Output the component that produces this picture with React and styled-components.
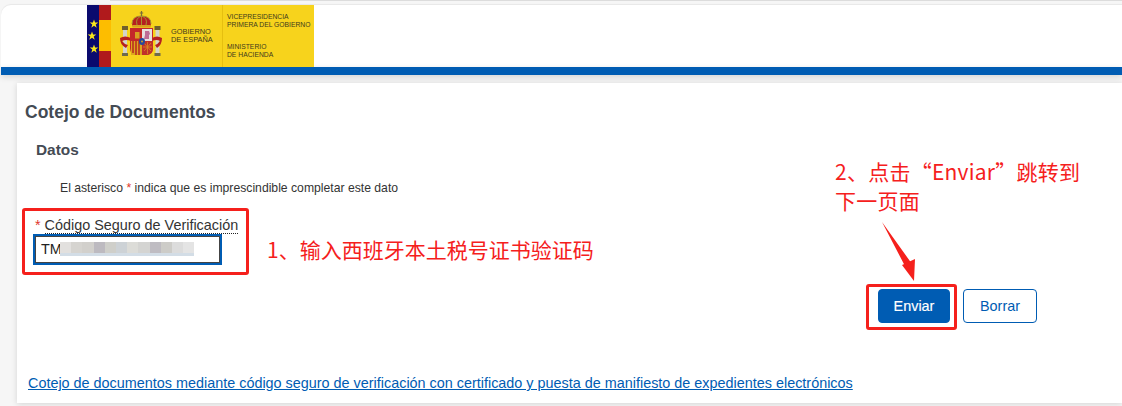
import React from "react";
import styled, { createGlobalStyle } from "styled-components";

const GlobalStyle = createGlobalStyle`
	html, body {
		margin: 0;
		padding: 0;
		background: #f6f6f6;
		font-family: "Liberation Sans", Arial, sans-serif;
		overflow: hidden;
	}
`;

const BLUR_BLOCKS = ["#e2e0de", "#d6d4d0", "#d2d0cc", "#bdbac0", "#cfcfca", "#cdd2d6", "#dcdcd8", "#d4d4d2", "#bfbcc2", "#cdccc8", "#dcdcdc", "#e4e4e4"];

const STAR = "M0 -4.500 L1.100 -1.400 L4.300 -1.400 L1.700 0.600 L2.700 3.700 L0 1.800 L-2.700 3.700 L-1.700 0.600 L-4.300 -1.400 L-1.100 -1.400Z";

function Logo() {
	return (
		<LogoBox>
			<svg width="227" height="62" viewBox="0 0 227 62">
				<rect width="227" height="62" fill="#f7d31c" />
				{/* flag bands */}
				<rect width="12" height="62" fill="#0a0a6e" />
				<rect x="12" width="12" height="62" fill="#b01a1c" />
				<rect x="12" y="15" width="12" height="31" fill="#fdbd00" />
				<path d={STAR} transform="translate(7 19)" fill="#f8e71c" />
				<path d={STAR} transform="translate(5 31)" fill="#f8e71c" />
				<path d={STAR} transform="translate(7 44)" fill="#f8e71c" />

				{/* columns */}
				<rect x="36" y="24" width="4" height="24" fill="#d4d4c8" />
				<rect x="68.500" y="24" width="4" height="24" fill="#d4d4c8" />
				<rect x="35" y="21" width="6" height="4" fill="#6f5f2c" />
				<rect x="67.500" y="21" width="6" height="4" fill="#6f5f2c" />
				<rect x="35" y="48" width="6" height="3" fill="#6f6a4a" />
				<rect x="67.500" y="48" width="6" height="3" fill="#6f6a4a" />
				{/* ribbons */}
				<path d="M33 33 Q38 30 44 33 L44 36 Q39 34 35 36 Q37 39 41 40 L39 43 Q33 40 33 33Z" fill="#b5201f" />
				<path d="M75 33 Q70 30 65 33 L65 36 Q70 34 73 36 Q71 39 68 40 L70 43 Q75 40 75 33Z" fill="#b5201f" />

				{/* shield */}
				<path d="M43 23 L66 23 L66 43 Q66 50 59 50 L50 50 Q43 50 43 43Z" fill="#c4282a" />
				<rect x="55" y="24" width="10" height="12" fill="#e6dfe0" />
				<path d="M58 26 h4 l1 3 l-1 1 v4 h-5 l1 -4z" fill="#bd6b96" />
				<rect x="48" y="27" width="4.500" height="6.500" fill="#d8a020" />
				<rect x="44" y="36" width="11" height="14" fill="#dca61f" />
				<path d="M46 36 v12 M49 36 v14 M52 36 v14" stroke="#b5201f" strokeWidth="1.400" />
				<path d="M55 36 h11 v7 Q66 50 59 50 L55 50Z" fill="#c0302a" />
				<path d="M57 38 L64 46 M64 38 L57 46 M56 42 h9 M60.500 37 v12" stroke="#d98a20" strokeWidth="0.800" />
				<ellipse cx="55" cy="36.500" rx="3" ry="3.500" fill="#28499a" />
				<circle cx="55" cy="36.500" r="1" fill="#d8a020" />

				{/* crown */}
				<path d="M45 19 Q45 11 54.500 11 Q64 11 64 19 L63 22 L46 22Z" fill="#b5201f" />
				<rect x="45.500" y="20" width="18" height="2.500" fill="#d8a020" />
				<path d="M45 19 Q45 11 54.500 11 Q64 11 64 19 M50 20 Q48 13 54.500 11 Q61 13 59 20 M54.500 11 v9" fill="none" stroke="#a89030" strokeWidth="1" />
				<path d="M54.500 6 v5 M52.800 8 h3.400" stroke="#7a6c38" strokeWidth="1.200" />

				<LogoText x="84" y="29" $size={7.4}>GOBIERNO</LogoText>
				<LogoText x="84" y="37" $size={7.4}>DE ESPAÑA</LogoText>
				<rect x="135" width="1" height="62" fill="#e6bf10" />
				<LogoText x="140" y="14" $size={6.750}>VICEPRESIDENCIA</LogoText>
				<LogoText x="140" y="22" $size={6.750}>PRIMERA DEL GOBIERNO</LogoText>
				<LogoText x="140" y="44" $size={6.750}>MINISTERIO</LogoText>
				<LogoText x="140" y="52" $size={6.750}>DE HACIENDA</LogoText>
			</svg>
		</LogoBox>
	);
}

export default function App() {
	return (
		<Page>
			<GlobalStyle />
			<TopEdge />
			<Header>
				<Logo />
			</Header>
			<BlueBar />
			<Card>
				<Title>Cotejo de Documentos</Title>
				<SubTitle>Datos</SubTitle>
				<Notice>
					El asterisco <Required>*</Required> indica que es imprescindible completar este dato
				</Notice>
				<Field>
					<Label>
						<Required>*</Required> <LabelText>Código Seguro de Verificación</LabelText>
					</Label>
					<InputBox>
						TM
						<BlurStrip>
							{BLUR_BLOCKS.map((color, i) => (
								<BlurBlock key={i} style={{ background: color }} />
							))}
						</BlurStrip>
					</InputBox>
				</Field>
				<Actions>
					<PrimaryButton>Enviar</PrimaryButton>
					<SecondaryButton>Borrar</SecondaryButton>
				</Actions>
				<FooterLink href="#">
					Cotejo de documentos mediante código seguro de verificación con certificado y puesta de manifiesto de expedientes electrónicos
				</FooterLink>
			</Card>

			<FieldHighlight />
			<ButtonHighlight />
			<StepOne>1、输入西班牙本土税号证书验证码</StepOne>
			<StepTwo>
				2、点击“Enviar”跳转到
				<br />
				下一页面
			</StepTwo>
			<Arrow width="40" height="64" viewBox="0 0 40 64">
				<path d="M1 1 L25 47 L31 43Z M21 44 L33 60 L34 38Z" fill="#f5201c" />
			</Arrow>
		</Page>
	);
}

const Page = styled.div`
	position: relative;
	width: 1122px;
	height: 406px;
	overflow: hidden;
	background: #f6f6f6;
`;

const TopEdge = styled.div`
	height: 1px;
	margin-left: 110px;
	background: #dcdcdc;
`;

const Header = styled.header`
	height: 62px;
	margin: 4px 0 0 1px;
	padding-left: 86px;
	background: #fff;
	border-top-left-radius: 10px;
	box-shadow: 0 -1px 1px rgba(0, 0, 0, 0.06);
`;

const LogoBox = styled.div`
	width: 227px;
	height: 62px;
	svg {
		display: block;
	}
`;

const LogoText = styled.text`
	font-family: "Liberation Sans", Arial, sans-serif;
	font-size: ${(props) => props.$size}px;
	fill: #3f3a1c;
`;

const BlueBar = styled.div`
	height: 8px;
	margin-left: 1px;
	background: #005cb3;
	box-shadow: 0 2px 6px rgba(0, 0, 0, 0.14);
`;

const Card = styled.main`
	display: flex;
	flex-direction: column;
	box-sizing: border-box;
	height: 320px;
	margin: 8px 0 0 17px;
	padding: 20px 0 0 8px;
	background: #fff;
	box-shadow: 0 1px 6px rgba(0, 0, 0, 0.14);
	color: #333;
`;

const Title = styled.h1`
	margin: 0;
	font-size: 17.500px;
	line-height: 18px;
	font-weight: 700;
	color: #444b54;
`;

const SubTitle = styled.h2`
	margin: 20px 0 0 11px;
	font-size: 15.400px;
	line-height: 18px;
	font-weight: 700;
	color: #444b54;
`;

const Notice = styled.p`
	margin: 22px 0 0 35px;
	font-size: 12.200px;
	line-height: 14px;
	color: #333;
`;

const Required = styled.span`
	color: #e0352b;
`;

const Field = styled.div`
	display: flex;
	flex-direction: column;
	align-items: flex-start;
	margin: 22px 0 0 9px;
`;

const Label = styled.label`
	font-size: 14.400px;
	line-height: 16px;
	color: #333;
	margin-left: 1px;
`;

const LabelText = styled.span`
	border-bottom: 1px dotted #222;
`;

const InputBox = styled.div`
	position: relative;
	box-sizing: border-box;
	width: 189px;
	height: 31px;
	margin: 1px 0 0 -1px;
	padding-left: 6px;
	border: 2px solid #005cb3;
	outline: 1px solid #444;
	outline-offset: -3px;
	font-size: 14.400px;
	line-height: 27px;
	color: #222;
	background: #fff;
`;

const BlurStrip = styled.div`
	position: absolute;
	left: 25px;
	top: 6px;
	display: flex;
	border-bottom: 3px solid #d3dde6;
`;

const BlurBlock = styled.span`
	width: 11.200px;
	height: 11px;
`;

const Actions = styled.div`
	display: flex;
	justify-content: flex-end;
	gap: 13px;
	margin: 24px 85px 0 0;
`;

const PrimaryButton = styled.button`
	box-sizing: border-box;
	width: 72px;
	height: 34px;
	border: 1px solid #005cb3;
	border-radius: 4px;
	background: #005cb3;
	color: #fff;
	font-family: inherit;
	font-size: 14.400px;
	-webkit-text-stroke: 0.15px #fff;
`;

const SecondaryButton = styled.button`
	box-sizing: border-box;
	width: 74px;
	height: 34px;
	border: 1px solid #005cb3;
	border-radius: 4px;
	background: #fff;
	color: #005cb3;
	font-family: inherit;
	font-size: 14.400px;
`;

const FooterLink = styled.a`
	align-self: flex-start;
	margin: 52px 0 0 3px;
	font-size: 14.400px;
	line-height: 16px;
	color: #005cb3;
	text-decoration: underline;
`;

const FieldHighlight = styled.div`
	position: absolute;
	left: 22px;
	top: 208px;
	width: 227px;
	height: 67px;
	box-sizing: border-box;
	border: 3px solid #f5201c;
	border-radius: 3px;
`;

const ButtonHighlight = styled.div`
	position: absolute;
	left: 866px;
	top: 284px;
	width: 91px;
	height: 46px;
	box-sizing: border-box;
	border: 3px solid #f5201c;
	border-radius: 3px;
`;

const StepOne = styled.div`
	position: absolute;
	left: 267px;
	top: 235px;
	font-family: "Noto Sans CJK SC", sans-serif;
	font-size: 21px;
	line-height: 28px;
	color: #f5201c;
	white-space: nowrap;
`;

const StepTwo = styled.div`
	position: absolute;
	left: 835px;
	top: 157px;
	font-family: "Noto Sans CJK SC", sans-serif;
	font-size: 21px;
	letter-spacing: 0.25px;
	line-height: 29px;
	color: #f5201c;
	white-space: nowrap;
`;

const Arrow = styled.svg`
	position: absolute;
	left: 881px;
	top: 221px;
`;
